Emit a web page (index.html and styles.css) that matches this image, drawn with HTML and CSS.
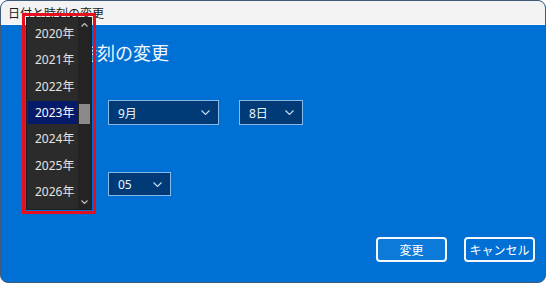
FILE: index.html
```html
<!DOCTYPE html>
<html lang="ja">
<head>
<meta charset="utf-8">
<title>日付と時刻の変更</title>
<link rel="stylesheet" href="styles.css">
</head>
<body>
<div class="window">
  <div class="titlebar">日付と時刻の変更</div>
  <div class="content">
    <h1 class="heading">日付と時刻の変更</h1>
    <div class="row row-date">
      <div class="combo combo-month"><span>9月</span><svg class="chev" width="9" height="5" viewBox="0 0 9 5"><path d="M0.5 0.5 L4.5 4.5 L8.5 0.5" fill="none" stroke="#c9dcf0" stroke-width="1.1"/></svg></div>
      <div class="combo combo-day"><span>8日</span><svg class="chev" width="9" height="5" viewBox="0 0 9 5"><path d="M0.5 0.5 L4.5 4.5 L8.5 0.5" fill="none" stroke="#c9dcf0" stroke-width="1.1"/></svg></div>
    </div>
    <div class="row row-time">
      <div class="combo combo-min"><span>05</span><svg class="chev" width="9" height="5" viewBox="0 0 9 5"><path d="M0.5 0.5 L4.5 4.5 L8.5 0.5" fill="none" stroke="#c9dcf0" stroke-width="1.1"/></svg></div>
    </div>
    <div class="actions">
      <button class="btn btn-primary">変更</button>
      <button class="btn">キャンセル</button>
    </div>
  </div>
  <div class="dropdown-mark">
    <div class="dropdown">
      <ul class="list">
        <li class="item">2020年</li>
        <li class="item">2021年</li>
        <li class="item">2022年</li>
        <li class="item selected">2023年</li>
        <li class="item">2024年</li>
        <li class="item">2025年</li>
        <li class="item">2026年</li>
      </ul>
      <div class="scrollbar">
        <div class="arrow"><svg width="7" height="4" viewBox="0 0 7 4"><path d="M0.5 3.5 L3.5 0.5 L6.5 3.5" fill="none" stroke="#bdbdbd" stroke-width="1.2"/></svg></div>
        <div class="thumb"></div>
        <div class="spacer"></div>
        <div class="arrow"><svg width="7" height="4" viewBox="0 0 7 4"><path d="M0.5 0.5 L3.5 3.5 L6.5 0.5" fill="none" stroke="#bdbdbd" stroke-width="1.2"/></svg></div>
      </div>
    </div>
  </div>
</div>
</body>
</html>
```
FILE: styles.css
```css
* { box-sizing: border-box; }
html, body { margin: 0; padding: 0; background: #ffffff; }
body {
  font-family: "Noto Sans", "Noto Sans CJK JP", sans-serif;
  font-size: 12px;
}
.window {
  position: relative;
  width: 546px;
  height: 283px;
  border: 1px solid #3f5b78;
  border-radius: 8px;
  overflow: hidden;
  background: #0070d4;
  display: flex;
  flex-direction: column;
}
.titlebar {
  height: 24px;
  background: #f3f3f3;
  border-bottom: 1px solid #fbfbfb;
  color: #1b1b1b;
  font-size: 12px;
  line-height: 23px;
  padding-left: 7px;
  font-family: "Noto Sans CJK JP", sans-serif;
}
.content {
  flex: 1;
  display: flex;
  flex-direction: column;
  padding: 0 10px 0 9px;
}
.heading {
  margin: 14px 0 0 15px;
  font-size: 18px;
  line-height: 26px;
  font-weight: 400;
  color: #f2f7fd;
  font-family: "Noto Sans CJK JP", sans-serif;
}
.row {
  display: flex;
  gap: 20px;
  margin-left: 98px;
}
.row-date { margin-top: 35px; }
.row-time { margin-top: 47px; }
.combo {
  height: 25px;
  background: #003b78;
  border: 1px solid #86b8ea;
  color: #eef4fb;
  display: flex;
  align-items: center;
  justify-content: space-between;
  padding: 0 8px 0 9px;
  font-size: 12px;
}
.combo-month { width: 111px; }
.combo-day { width: 64px; }
.combo-min { width: 63px; height: 24px; }
.chev { display: block; }
.actions {
  display: flex;
  justify-content: flex-end;
  gap: 17px;
  margin-top: 41px;
}
.btn {
  width: 71px;
  height: 25px;
  border: 2px solid #f4f8fd;
  border-radius: 4px;
  background: #0070d4;
  color: #ffffff;
  font-family: "Noto Sans CJK JP", sans-serif;
  font-size: 12px;
  padding: 0;
  line-height: 20px;
}
.btn-primary { background: #0d79d9; }
.dropdown-mark {
  position: absolute;
  left: 21px;
  top: 12px;
  width: 74px;
  height: 201px;
  border: 3px solid #e5101f;
  padding: 1px;
}
.dropdown {
  width: 100%;
  height: 100%;
  background: #2b2b2b;
  border: 1px solid #1e1e1e;
  display: flex;
}
.list {
  list-style: none;
  margin: 0;
  padding: 4px 0 0 1px;
  flex: 1;
  display: flex;
  flex-direction: column;
  gap: 3.33px;
}
.item {
  height: 23px;
  line-height: 23px;
  padding-left: 7px;
  color: #e4e4e4;
  font-size: 12px;
}
.item.selected {
  background: #061a6a;
  color: #ffffff;
}
.scrollbar {
  width: 13px;
  background: #232323;
  display: flex;
  flex-direction: column;
  align-items: center;
}
.arrow {
  height: 14px;
  display: flex;
  align-items: center;
  justify-content: center;
}
.thumb {
  width: 11px;
  height: 20px;
  margin-top: 72px;
  background: #8a8a8a;
}
.spacer { flex: 1; }
```
